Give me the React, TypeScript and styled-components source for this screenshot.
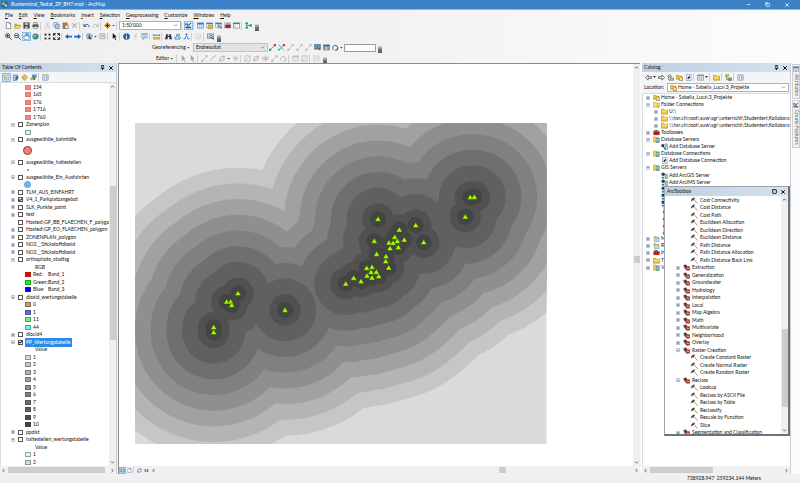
import React from "react";
import styled, { createGlobalStyle, css } from "styled-components";
import { ChevronDown, ChevronLeft, ChevronRight, ChevronUp, Copy, Minus, Pin, Square, X } from "lucide-react";

const GlobalStyle = createGlobalStyle`
  * { box-sizing: border-box; }
  body { margin: 0; }
  button, input, select { font: inherit; color: inherit; margin: 0; padding: 0; border: 0; background: none; border-radius: 0; }
  svg { display: block; }
`;

const Shell = styled.div`
  display: flex;
  flex-direction: column;
  height: 100vh;
  overflow: hidden;
  background: linear-gradient(90deg, #f0f0f0, #f2f2f2 45%, #fcfcfc);
  color: #111;
  font: 5px/7px Lato, "Open Sans", sans-serif;
  white-space: nowrap;
`;

const TitleBar = styled.header`
  display: flex;
  align-items: center;
  gap: 3px;
  height: 10px;
  padding: 0 10px 0 1px;
  background: #3b82c8;
  border-bottom: 1px solid #8fb8e2;
  color: #fff;
`;
const WindowTitle = styled.h1`
  flex: 1;
  margin: 0;
  font: inherit;
`;
const WindowButtons = styled.div`
  display: flex;
  gap: 14px;
`;
const PlainButton = styled.button`
  display: flex;
  align-items: center;
  justify-content: center;
`;

const MenuBar = styled.nav`
  display: flex;
  gap: 6px;
  height: 10px;
  align-items: center;
  padding-left: 5px;
`;
const MenuButton = styled.button`
  &::first-letter { text-decoration: underline; }
`;

const Toolbar = styled.div<{ $indent?: number }>`
  display: flex;
  align-items: center;
  height: 11px;
  margin-left: ${(p) => p.$indent ?? 0}px;
  padding-left: 4px;
`;
const ToolButton = styled.button<{ $on?: boolean; $off?: boolean }>`
  display: grid;
  place-items: center;
  width: 9px;
  height: 9px;
  flex: none;
  ${(p) => p.$on && css`background: #d5e9fb; box-shadow: inset 0 0 0 1px #84bdf0;`}
  ${(p) => p.$off && css`filter: grayscale(1); opacity: 0.35;`}
`;
const Divider = styled.span`
  width: 3px;
  height: 8px;
  flex: none;
  border-left: 1px solid #cfcfcf;
`;
const Caret = styled.span`
  width: 4px;
  flex: none;
  &::after {
    content: "";
    display: block;
    width: 3px;
    height: 2px;
    background: #333;
    clip-path: polygon(0 0, 100% 0, 50% 100%);
  }
`;
const Overflow = styled.button`
  width: 4px;
  height: 7px;
  margin-left: 2px;
  align-self: flex-end;
  background: linear-gradient(#d8d8d8, #777 50%, #555);
`;
const ToolbarMenu = styled.button`
  display: flex;
  align-items: center;
  gap: 1px;
  padding-right: 2px;
`;
const ComboBox = styled.label<{ $width?: number; $grey?: boolean }>`
  display: grid;
  align-items: center;
  flex: ${(p) => (p.$width ? "none" : "1")};
  width: ${(p) => (p.$width ? `${p.$width}px` : "auto")};
  height: 9px;
  padding: 0 2px;
  border: 1px solid ${(p) => (p.$grey ? "#c4c4c4" : "#b0b0b0")};
  background: ${(p) => (p.$grey ? "#e3e3e3" : "#fff")};
  > * { grid-area: 1 / 1; }
  > svg { justify-self: end; color: #555; }
`;
const Select = styled.select<{ $icon?: boolean }>`
  appearance: none;
  width: 100%;
  height: 7px;
  line-height: 7px;
  padding-left: ${(p) => (p.$icon ? 8 : 0)}px;
`;
const ComboIcon = styled.span``;
const TextBox = styled.input`
  width: 32px;
  height: 8px;
  border: 1px solid #999;
  background: #fff;
`;

const Workspace = styled.main`
  display: flex;
  flex: 1;
  min-height: 0;
  margin-top: -2px;
  padding-top: 1px;
`;
const Dock = styled.section<{ $width: number }>`
  display: flex;
  flex-direction: column;
  flex: none;
  width: ${(p) => p.$width}px;
  min-height: 0;
  background: #f4f5f6;
  border-right: 1px solid #c9cfd6;
`;
const DockHeader = styled.div`
  display: flex;
  align-items: center;
  gap: 3px;
  height: 9px;
  flex: none;
  padding: 0 2px;
  background: linear-gradient(90deg, #bfd0e2, #d5e1ee);
`;
const DockTitle = styled.h2`
  flex: 1;
  margin: 0;
  font: inherit;
`;
const DockTools = styled(Toolbar)`
  height: 10px;
  flex: none;
  padding-left: 2px;
`;
const DockBody = styled.div`
  display: flex;
  flex: 1;
  min-height: 0;
  background: #fff;
  border-left: 1px solid #d8dbdf;
  border-top: 1px solid #d8dbdf;
`;

const Rows = styled.ul<{ $tracks: string }>`
  display: grid;
  grid-auto-rows: ${(p) => p.$tracks};
  align-content: start;
  flex: 1;
  min-width: 0;
  margin: 0;
  padding: 0;
  overflow: hidden;
  list-style: none;
`;
const Row = styled.li<{ $indent: number; $tall?: boolean }>`
  display: flex;
  align-items: center;
  padding-left: ${(p) => p.$indent}px;
  min-height: 0;
  ${(p) => p.$tall && css`grid-row: span 2;`}
`;
const Expander = styled.button<{ $hidden?: boolean }>`
  display: grid;
  place-items: center;
  width: 4px;
  height: 4px;
  margin-right: 3px;
  flex: none;
  border: 1px solid #c3c8d2;
  background: #eef0f6;
  visibility: ${(p) => (p.$hidden ? "hidden" : "visible")};
  &::after {
    content: "";
    width: 2px;
    height: ${(p) => (p["aria-expanded"] ? 1 : 2)}px;
    background: #8e9bc0;
  }
`;
const LayerLabel = styled.label`
  display: flex;
  align-items: center;
  gap: 3px;
`;
const CheckBox = styled.input`
  appearance: none;
  width: 5px;
  height: 5px;
  flex: none;
  border: 1px solid #555;
  background: #fff;
  &:checked::before {
    content: "";
    display: block;
    width: 3px;
    height: 3px;
    background: #111;
    clip-path: polygon(0 40%, 40% 60%, 100% 0, 100% 40%, 40% 100%, 0 80%);
  }
`;
const LayerName = styled.span<{ $selected?: boolean }>`
  ${(p) => p.$selected && css`background: #2b8ae6; color: #fff; box-shadow: 0 0 0 1px #2b8ae6;`}
`;
const Swatch = styled.span<{ $fill: string; $edge?: string }>`
  width: 6px;
  height: 5px;
  margin-right: 2px;
  flex: none;
  background: ${(p) => p.$fill};
  border: 1px solid ${(p) => p.$edge ?? "rgba(60,60,60,0.45)"};
`;
const Dot = styled.span<{ $size: number; $fill: string; $edge?: string }>`
  width: ${(p) => p.$size}px;
  height: ${(p) => p.$size}px;
  border-radius: 50%;
  background: ${(p) => p.$fill};
  border: ${(p) => (p.$edge ? `1px solid ${p.$edge}` : "0")};
`;
const BandName = styled.span`
  width: 15px;
  flex: none;
`;
const TreeIcon = styled.span<{ $gap: number }>`
  flex: none;
  margin-right: ${(p) => p.$gap}px;
`;

const VTrack = styled.div`
  display: flex;
  flex-direction: column;
  align-items: center;
  width: 7px;
  flex: none;
  background: #f0f0f0;
  color: #444;
`;
const HTrack = styled.div`
  display: flex;
  align-items: center;
  flex: 1;
  height: 8px;
  background: #f0f0f0;
  color: #444;
`;
const Arrow = styled(PlainButton)`
  width: 7px;
  height: 7px;
  flex: none;
`;
const Space = styled.span<{ $grow: number }>`
  flex: ${(p) => p.$grow} 0 0;
`;
const Thumb = styled.span<{ $grow: number; $vertical?: boolean }>`
  flex: ${(p) => p.$grow} 0 0;
  background: #cdcdcd;
  ${(p) => (p.$vertical ? css`width: 6px;` : css`height: 6px;`)}
`;

const MapFrame = styled.section`
  display: flex;
  flex-direction: column;
  flex: 1;
  min-width: 0;
  margin: 0 2px 0 1px;
  border-left: 1px solid #8c8c8c;
  border-top: 1px solid #8c8c8c;
`;
const MapRow = styled.div`
  display: flex;
  flex: 1;
  min-height: 0;
`;
const MapView = styled.div`
  flex: 1;
  min-width: 0;
  background: #fff;
  > svg { width: 100%; height: 100%; }
`;
const MapFooter = styled.div`
  display: flex;
  align-items: center;
  height: 8px;
  flex: none;
  background: #f0f0f0;
`;
const FooterButton = styled(ToolButton)`
  width: 7px;
  height: 7px;
`;

const LocationRow = styled.div`
  display: flex;
  align-items: center;
  gap: 3px;
  height: 11px;
  flex: none;
  padding: 0 1px 0 2px;
`;
const SideTabs = styled.aside`
  display: flex;
  flex-direction: column;
  gap: 1px;
  width: 9px;
  flex: none;
  padding: 1px 0 0 1px;
`;
const SideTab = styled.button`
  display: flex;
  align-items: center;
  gap: 2px;
  padding: 1px 0 2px;
  writing-mode: vertical-rl;
  border: 1px solid #d0d0d0;
  background: #f2f2f2;
  color: #666;
`;

const CatalogWrap = styled.div`
  position: relative;
  display: flex;
  flex: none;
  min-height: 0;
`;
const Toolbox = styled.section`
  position: absolute;
  top: 123px;
  left: 22px;
  right: 1px;
  height: 250px;
  display: flex;
  flex-direction: column;
  background: #fff;
  border: 1px solid #9aa5b1;
  border-right: 2px solid #6d7278;
  border-bottom: 2px solid #6d7278;
`;
const StatusBar = styled.footer`
  display: flex;
  justify-content: flex-end;
  align-items: center;
  height: 9px;
  flex: none;
  padding-right: 39px;
  background: #f0f0f0;
`;

const glyphs: Record<string, React.ReactNode> = {
  globe: <><circle cx="8" cy="8" r="7" fill="#1e5c86" /><path d="M3 4l5-2 2 4-4 4-4-2z" fill="#8fd06a" /><circle cx="11" cy="10" r="3.5" fill="#cfe8f5" stroke="#222" /></>,
  page: <path d="M3 1h7l3 3v11H3zM10 1v3h3" fill="#fff" stroke="#556" strokeWidth="1.4" />,
  open: <><path d="M1 4h5l1 2h7v8H1z" fill="#d9a520" /><path d="M4 8h12l-3 6H1z" fill="#f6d878" stroke="#9a7a20" /></>,
  save: <><path d="M1 1h14v14H1z" fill="#37424e" /><path d="M4 2h8v5H4z" fill="#d8c25a" /><path d="M5 10h6v5H5z" fill="#ccc" /></>,
  print: <><path d="M4 1h8v5H4z" fill="#ddd" stroke="#444" /><path d="M1 6h14v6H1z" fill="#555" /><path d="M4 10h8v5H4z" fill="#eee" stroke="#444" /></>,
  cut: <path d="M5 1l5 10M11 1L6 11M5 11a2 2 0 1 0 1 3M11 11a2 2 0 1 1-1 3" fill="none" stroke="#555" strokeWidth="1.6" />,
  copy: <><path d="M2 1h8v10H2z" fill="#e8f0fb" stroke="#5d7896" strokeWidth="1.4" /><path d="M6 5h8v10H6z" fill="#b9d0ec" stroke="#456a95" strokeWidth="1.4" /></>,
  paste: <><path d="M2 2h10v13H2z" fill="#c08038" stroke="#704818" /><path d="M7 7h8v8H7z" fill="#dce9f8" stroke="#456" /></>,
  remove: <path d="M3 3l10 10M13 3L3 13" stroke="#333" strokeWidth="2.6" />,
  undo: <path d="M2 4v6h6M3 9c4-6 11-4 11 3" fill="none" stroke="#25539b" strokeWidth="2.2" />,
  redo: <path d="M14 4v6H8M13 9C9 3 2 5 2 12" fill="none" stroke="#555" strokeWidth="2.2" />,
  add: <><path d="M8 1l7 7-7 7-7-7z" fill="#e5b825" stroke="#554310" /><path d="M8 4v8M4 8h8" stroke="#222" strokeWidth="2.4" /></>,
  editor: <><path d="M1 14V6l4 4 4-5 6 9z" fill="#9cc7ee" /><path d="M2 13h12M4 11L14 2M2 3v4M5 3v4" stroke="#222" strokeWidth="2" /></>,
  table: <><path d="M1 2h14v12H1z" fill="#fff" stroke="#496da0" strokeWidth="1.4" /><path d="M1 2h14v4H1z" fill="#3f78c0" /><path d="M1 10h14M6 6v8M10 6v8" stroke="#7d96b8" /></>,
  grid: <><path d="M1 2h14v12H1z" fill="#fff" stroke="#777" strokeWidth="1.4" /><path d="M1 2h14v3H1z" fill="#888" /><path d="M1 8h14M1 11h14M6 5v9M10 5v9" stroke="#999" /></>,
  catalog: <><path d="M1 2h14v11H1z" fill="#fff" stroke="#496da0" /><path d="M1 2h14v3H1z" fill="#3f78c0" /><path d="M5 7h10v8H5z" fill="#e9bd37" stroke="#806515" /></>,
  search: <><path d="M1 2h14v11H1z" fill="#e8f3fd" stroke="#496da0" /><path d="M1 2h14v3H1z" fill="#3f78c0" /><circle cx="9" cy="9" r="3" fill="#b8ddc8" stroke="#345" /><path d="M11 11l4 4" stroke="#333" strokeWidth="2" /></>,
  toolbox: <><path d="M1 2h14v11H1z" fill="#e8f3fd" stroke="#496da0" /><path d="M3 6h12v8H3z" fill="#c2221c" /><path d="M6 6V4h6v2M3 9h12" stroke="#611" fill="none" /></>,
  python: <><path d="M1 2h14v12H1z" fill="#fff" stroke="#555" strokeWidth="1.2" /><path d="M1 2h14v3H1z" fill="#3f78c0" /><path d="M3 8l3 2-3 2" fill="none" stroke="#777" /></>,
  model: <><path d="M4 3v10M4 8h8" stroke="#2e9b52" strokeWidth="2" /><path d="M1 1h6v4H1z" fill="#2b7fd0" /><path d="M1 11h6v4H1z" fill="#2f9f55" /><path d="M10 5h6v6h-6z" fill="#2bb0c5" /></>,
  zoomIn: <><circle cx="6" cy="6" r="5" fill="#e3eff8" stroke="#333" strokeWidth="1.6" /><path d="M3 6h6M6 3v6M10 10l5 5" stroke="#222" strokeWidth="2" /></>,
  zoomOut: <><circle cx="6" cy="6" r="5" fill="#e3eff8" stroke="#333" strokeWidth="1.6" /><path d="M3 6h6M10 10l5 5" stroke="#222" strokeWidth="2" /></>,
  hand: <path d="M4 15L1 8l2-1 2 2V3l2-1 1 5V1h2v6l1-5 2 1v6l1-3 1 1-1 5-2 4z" fill="#fff" stroke="#555" strokeWidth="1.2" />,
  world: <><circle cx="8" cy="8" r="7" fill="#2a71c0" /><path d="M2 5l5-3 5 3-4 5-4 2zM10 11l4-3-3 6z" fill="#6cc04c" /></>,
  shrink: <path d="M1 1h5v5H1zM10 1h5v5h-5zM1 10h5v5H1zM10 10h5v5h-5z" fill="#111" stroke="#f2f2f2" />,
  grow: <path d="M1 6V1h5zM10 1h5v5zM1 10v5h5zM15 10v5h-5zM3 3l3 3M13 3l-3 3M3 13l3-3M13 13l-3-3" fill="#111" stroke="#111" strokeWidth="1.4" />,
  back: <path d="M0 8l7-6v4h9v4H7v4z" fill="#2463c4" />,
  next: <path d="M16 8L9 2v4H0v4h9v4z" fill="#2463c4" />,
  select: <><path d="M1 3l8-2 6 5-3 8-9-1z" fill="#a9cde0" stroke="#567" /><path d="M7 4v9l2-2 3 3" fill="#333" stroke="#222" strokeWidth="1.4" /></>,
  clear: <path d="M2 2h11v11H2zM5 5h5v4H5z" fill="#fff" stroke="#888" strokeWidth="1.5" />,
  pointer: <path d="M4 0v13l3-3 3 6 2-1-3-6h4z" fill="#111" />,
  info: <><circle cx="8" cy="8" r="7.5" fill="#1b5db8" /><path d="M8 7v6M8 3v2" stroke="#fff" strokeWidth="2.4" /></>,
  bolt: <path d="M10 0L4 9h4l-3 7 8-10H9l3-6z" fill="#888" />,
  popup: <><path d="M2 1h12v10H8l-3 4v-4H2z" fill="#dcecff" stroke="#4a78b5" strokeWidth="1.4" /><path d="M5 4h6M5 7h6" stroke="#777" strokeWidth="1.4" /></>,
  measure: <><path d="M1 10h14v4H1z" fill="#ecc445" stroke="#8a6a10" /><path d="M1 5h14M1 3v4M15 3v4" stroke="#2463c4" strokeWidth="1.8" /></>,
  find: <path d="M3 2h3v4h4V2h3l3 12h-6V9H6v5H0z" fill="#2d2d35" />,
  route: <><path d="M2 14h12V9H9V3H6v6H2z" fill="#cfe3f5" stroke="#3271b4" strokeWidth="1.4" /><circle cx="12" cy="4" r="2" fill="#2f9f55" /></>,
  xy: <path d="M8 1v6M8 7l-5 7M8 7l5 7M5 3h6M1 13h5M10 13h5" stroke="#3c82c8" strokeWidth="2" />,
  clock: <><path d="M1 2h12v11H1z" fill="#eee" stroke="#777" /><circle cx="10" cy="10" r="4" fill="#ddd" stroke="#666" /></>,
  viewer: <><path d="M1 2h14v10H1z" fill="#cfe3f5" stroke="#3b5f90" strokeWidth="1.4" /><circle cx="9" cy="8" r="3" fill="#fff" stroke="#222" strokeWidth="1.4" /><path d="M11 10l4 5" stroke="#222" strokeWidth="2" /></>,
  dataView: <><path d="M1 2h14v12H1z" fill="#4d8fd6" /><circle cx="8" cy="8" r="4" fill="#d8e06a" /></>,
  rectify: <><path d="M1 1h14v11H1z" fill="#5d87b8" stroke="#33557e" /><path d="M2 6h12v3H2z" fill="#7db35c" /><path d="M8 7l6 7" stroke="#cc3a2d" strokeWidth="2.4" /></>,
  linkTable: <><path d="M1 2h14v12H1z" fill="#fff" stroke="#496da0" strokeWidth="1.4" /><path d="M1 2h14v4H1z" fill="#2d5fa8" /><path d="M2 7h5v6H2z" fill="#4fb25e" /><path d="M9 7h5v6H9z" fill="#db6a5e" /></>,
  link: <><path d="M3 13L13 3" stroke="#45a05a" strokeWidth="1.8" /><path d="M0 11h5v5H0z" fill="#27ad45" /><path d="M11 0h5v5h-5z" fill="#dc3030" /></>,
  autoLink: <><path d="M2 2l11 12M3 13L14 2" stroke="#29a3c7" strokeWidth="2" /><path d="M0 11h4v4H0z" fill="#27ad45" /><path d="M11 0h5v5h-5z" fill="#dc3030" /></>,
  line: <path d="M2 14L14 2M1 12h4v3H1zM11 1h4v3h-4z" stroke="#444" strokeWidth="1.6" fill="none" />,
  rotate: <path d="M4 14a6 6 0 1 1 8-1M12 8v6h-5" fill="none" stroke="#304a9b" strokeWidth="2" />,
  arc: <path d="M2 14C2 6 8 2 14 2" stroke="#444" strokeWidth="2" fill="none" />,
  shape: <path d="M3 12V4h8M11 4v8H3M1 10h4v4H1zM9 2h4v4H9z" stroke="#444" strokeWidth="1.6" fill="none" />,
  star: <path d="M8 1v14M1 8h14M3 3l10 10M13 3L3 13" stroke="#444" strokeWidth="1.3" />,
  split: <path d="M8 1v14M2 5h4v6H2zM10 5h4v6h-4z" stroke="#444" strokeWidth="1.6" fill="none" />,
  verts: <path d="M2 2h12v12H2zM2 14L14 2" stroke="#444" strokeWidth="1.6" fill="none" />,
  order: <><path d="M3 3v10h4M3 8h4" stroke="#8a8a8a" strokeWidth="1.4" fill="none" /><path d="M1 1h5v4H1zM6 6h4v4H6zM6 11h4v4H6z" fill="#e8b93a" /><path d="M11 8h4M11 13h4M8 3h6" stroke="#5b83b5" strokeWidth="1.6" /></>,
  source: <><path d="M3 2h10v9l-3 4H3z" fill="#b9cbe0" stroke="#4d6b8f" strokeWidth="1.3" /><path d="M8 6l6-2v7l-6 4z" fill="#46607a" /></>,
  visible: <><path d="M8 1l7 7-7 7-7-7z" fill="#efc440" stroke="#9a7a10" /><circle cx="8" cy="8" r="2.5" fill="#fff" stroke="#555" /></>,
  picked: <><path d="M5 1h10v8H5z" fill="#2ea2dc" /><path d="M1 8h11v6H1z" fill="#d8a534" /><path d="M7 6l4 7" stroke="#222" strokeWidth="2" /></>,
  options: <path d="M2 2h12v12H2zM5 5h2M9 5h3M5 8h2M9 8h3M5 11h2M9 11h3" fill="#edf3fa" stroke="#5e7fa6" strokeWidth="1.5" />,
  greyBack: <path d="M1 8l6-6v4h8v4H7v4z" fill="#eee" stroke="#444" strokeWidth="1.6" />,
  greyNext: <path d="M15 8L9 2v4H1v4h8v4z" fill="#eee" stroke="#444" strokeWidth="1.6" />,
  up: <path d="M4 8V6H1l5-5 5 5H8v4h7v4H4z" fill="#ddd" stroke="#444" strokeWidth="1.4" />,
  home: <><path d="M1 3h5l1 2h7v7H1z" fill="#f0c63c" stroke="#94710f" /><path d="M7 10l4-4 4 4v5H8z" fill="#f9e6a0" stroke="#775a10" strokeWidth="1.3" /></>,
  folder: <><path d="M1 3h5l1 2h8v9H1z" fill="#f2cc48" stroke="#a07c14" strokeWidth="1.3" /><path d="M2 7h12" stroke="#fff0b0" strokeWidth="1.6" /></>,
  folderLink: <><path d="M1 3h5l1 2h8v9H1z" fill="#f6df8b" stroke="#b59438" strokeWidth="1.3" /><path d="M8 9h7v6H8z" fill="#eabf2d" /></>,
  treeView: <><path d="M1 1h7v5H1z" fill="#eabf2d" stroke="#94710f" /><path d="M4 6v7h4" stroke="#444" strokeWidth="1.6" fill="none" /><path d="M8 9h7v6H8z" fill="#5fa55d" stroke="#356b35" /></>,
  redbox: <><path d="M3 2h8v4H3z" fill="#777" /><path d="M1 5h14v9H1z" fill="#c92d22" /><path d="M1 9h14" stroke="#5e1009" strokeWidth="1.5" /></>,
  dbFolder: <><path d="M1 2h5l1 2h7v10H1z" fill="#f2d365" stroke="#a8861e" /><path d="M7 5h7v10H7z" fill="#7fb1a8" stroke="#386a74" /><path d="M7 9h7" stroke="#fff" /></>,
  addDb: <><path d="M9 2h6v13H9z" fill="#a9c9e6" stroke="#567" /><path d="M1 3h6v6H1z" fill="#202830" /><path d="M5 8l5 7" stroke="#23619c" strokeWidth="2.4" /></>,
  connect: <><path d="M3 1h11v14H3z" fill="#e8f1f8" stroke="#7c96ad" strokeWidth="1.4" /><path d="M5 10l5-6 2 3-4 5z" fill="#16374f" /></>,
  gis: <><circle cx="5" cy="5" r="4" fill="#23435c" /><path d="M9 5h6v10H9z" fill="#a4cba5" stroke="#4e7a52" /><path d="M2 11h5v4H2z" fill="#3475b8" /></>,
  gisRed: <><path d="M6 1h7v9H6z" fill="#cddce8" stroke="#7892a8" /><circle cx="8" cy="12" r="4" fill="#dd4433" /></>,
  cloud: <><path d="M1 2h6l1 2h6v4H1z" fill="#e7c24b" /><path d="M3 7h11v8H3z" fill="#b7d9f2" stroke="#4785b7" /></>,
  hammer: <><path d="M6 5l9 10" stroke="#9b8a6a" strokeWidth="2" /><path d="M0 8l2-4 5-3 3 2-3 1-1 4-2-1-2 3z" fill="#3a3a3a" /></>,
  tools: <><path d="M1 2l6-1 3 4-3 5-5-2z" fill="#4c4c4c" /><path d="M6 6h9v8H8l-3-4z" fill="#c73a2b" stroke="#63221a" strokeWidth="1.2" /><path d="M8 9l6 2" stroke="#eee" strokeWidth="1.4" /></>,
  refresh: <path d="M2 7c1-6 9-6 11-2M14 2v4h-4M14 9c-1 6-9 6-11 2M2 14v-4h4" fill="none" stroke="#2f6ab0" strokeWidth="2" />,
  pause: <path d="M2 3h5v10H2zM9 3h5v10H9z" fill="#5d8bc4" />,
};

const Glyph = ({ name, size = 7 }: { name: string; size?: number }) => (
  <svg width={size} height={size} viewBox="0 0 16 16" fill="none" aria-hidden="true">{glyphs[name]}</svg>
);

/* "|" draws a divider, "v" a drop-down mark, "+" a pressed tool and "-" a disabled one. */
const Tools = ({ items }: { items: string }) => (
  <>
    {items.split(" ").map((item, i) => {
      if (item === "|") return <Divider key={i} />;
      if (item === "v") return <Caret key={i} />;
      const name = item.replace(/^[+-]/, "");
      return (
        <ToolButton key={i} type="button" aria-label={name} $on={item[0] === "+"} $off={item[0] === "-"}>
          <Glyph name={name} />
        </ToolButton>
      );
    })}
  </>
);

const VScroll = ({ before, size, after }: { before: number; size: number; after: number }) => (
  <VTrack>
    <Arrow type="button" aria-label="Scroll up"><ChevronUp size={5} strokeWidth={4} /></Arrow>
    <Space $grow={before} /><Thumb $vertical $grow={size} /><Space $grow={after} />
    <Arrow type="button" aria-label="Scroll down"><ChevronDown size={5} strokeWidth={4} /></Arrow>
  </VTrack>
);
const HScroll = ({ before, size, after }: { before: number; size: number; after: number }) => (
  <HTrack>
    <Arrow type="button" aria-label="Scroll left"><ChevronLeft size={5} strokeWidth={4} /></Arrow>
    <Space $grow={before} /><Thumb $grow={size} /><Space $grow={after} />
    <Arrow type="button" aria-label="Scroll right"><ChevronRight size={5} strokeWidth={4} /></Arrow>
  </HTrack>
);

type TocItem =
  | { kind: "layer"; name: string; mark?: "+" | "-"; checked?: boolean; selected?: boolean }
  | { kind: "class"; name: string; fill: string; edge?: string }
  | { kind: "band"; name: string; band: string; fill: string }
  | { kind: "dot"; size: number; fill: string; edge?: string; tall?: boolean; at: number }
  | { kind: "heading"; name: string };

const layer = (name: string, mark?: "+" | "-", checked?: boolean, selected?: boolean): TocItem => ({ kind: "layer", name, mark, checked, selected });
const cls = (name: string, fill: string, edge?: string): TocItem => ({ kind: "class", name, fill, edge });

const greys = ["#dadada", "#c6c6c6", "#b4b4b4", "#a1a1a1", "#8f8f8f", "#808080", "#6f6f6f", "#606060", "#515151", "#444444"];

const toc: TocItem[] = [
  ...["154", "165", "176", "1'716", "1'760"].map((n) => cls(n, "#fa8379", "#e8786f")),
  layer("Zonenplan", "-"),
  cls("", "#bdfbf6"),
  layer("ausgewählte_bahnhöfe", "-"),
  { kind: "dot", size: 9, fill: "#f77c7c", edge: "#8c3c3c", tall: true, at: 22 },
  layer("ausgewählte_haltestellen", "-"),
  { kind: "dot", size: 2, fill: "#3f9f6e", at: 26 },
  layer("ausgewählte_Ein_Ausfahrten", "-"),
  { kind: "dot", size: 7, fill: "#6fb2f2", at: 23 },
  layer("TLM_AUS_EINFAHRT", "+"),
  layer("V4_1_Parkplatzangebot", "+", true),
  layer("SLK_Punkte_point", "+"),
  layer("test", "+"),
  layer("Hosted\\GP_BB_FLAECHEN_F_polygon"),
  layer("Hosted\\GP_EO_FLAECHEN_polygon", "+"),
  layer("ZONENPLAN_polygon", "+"),
  layer("NO2__Stickstoffdioxid", "+"),
  layer("NO2__Stickstoffdioxid", "+"),
  layer("orthophoto_stadtsg", "-"),
  { kind: "heading", name: "RGB" },
  { kind: "band", name: "Red:", band: "Band_1", fill: "#f00" },
  { kind: "band", name: "Green:", band: "Band_2", fill: "#0f0" },
  { kind: "band", name: "Blue:", band: "Band_3", fill: "#00f" },
  layer("dioxid_wertungstabelle", "-"),
  cls("0", "#cf9a72"),
  cls("1", "#6464f2"),
  cls("11", "#67f56b"),
  cls("44", "#6bf5f2"),
  layer("diocid4", "+"),
  layer("PP_Wertungstabelle", "-", true, true),
  { kind: "heading", name: "Value" },
  ...greys.map((g, i) => cls(String(i + 1), g)),
  layer("ppdist", "+"),
  layer("haltestellen_wertungstabelle", "-"),
  { kind: "heading", name: "Value" },
  cls("1", "#e3fbef"),
  cls("2", "#c3e8d3"),
];

const TocRow = ({ item }: { item: TocItem }) => {
  switch (item.kind) {
    case "layer":
      return (
        <Row $indent={10}>
          <Expander type="button" $hidden={!item.mark} aria-label={`Toggle ${item.name}`} aria-expanded={item.mark === "-"} />
          <LayerLabel>
            <CheckBox type="checkbox" defaultChecked={item.checked} />
            <LayerName $selected={item.selected}>{item.name}</LayerName>
          </LayerLabel>
        </Row>
      );
    case "class":
      return <Row $indent={24}><Swatch $fill={item.fill} $edge={item.edge} />{item.name}</Row>;
    case "band":
      return <Row $indent={24}><Swatch $fill={item.fill} /><BandName>{item.name}</BandName>{item.band}</Row>;
    case "dot":
      return <Row $indent={item.at} $tall={item.tall}><Dot $size={item.size} $fill={item.fill} $edge={item.edge} /></Row>;
    default:
      return <Row $indent={34}>{item.name}</Row>;
  }
};

type TreeNode = { level: number; icon: string; name: string; mark?: "+" | "-" };
const node = (level: number, mark: "+" | "-" | undefined, icon: string, name = ""): TreeNode => ({ level, mark, icon, name });

const catalog: TreeNode[] = [
  node(0, "+", "home", "Home - Sabella_Luca\\3_Projekte"),
  node(0, "-", "folderLink", "Folder Connections"),
  node(1, "+", "folder", "U:\\"),
  node(1, "+", "folder", "\\\\hsr.ch\\root\\auw\\sgr\\unterricht\\Studenten\\Kollabora"),
  node(1, "+", "folder", "\\\\hsr.ch\\root\\auw\\sgr\\unterricht\\Studenten\\Kollabora"),
  node(0, "+", "redbox", "Toolboxes"),
  node(0, "-", "dbFolder", "Database Servers"),
  node(1, undefined, "addDb", "Add Database Server"),
  node(0, "-", "dbFolder", "Database Connections"),
  node(1, undefined, "connect", "Add Database Connection"),
  node(0, "-", "dbFolder", "GIS Servers"),
  node(1, undefined, "gis", "Add ArcGIS Server"),
  node(1, undefined, "gis", "Add ArcIMS Server"),
  ...["gis", "gis", "gis", "gisRed", "gisRed", "gisRed", "gisRed"].map((icon) => node(1, undefined, icon)),
  node(0, "+", "cloud", "M"),
  node(0, "+", "cloud", "R"),
  node(0, "+", "redbox", "In"),
  node(0, "+", "folder", "T"),
  node(0, "+", "dbFolder", "V"),
];

const tool = (name: string) => node(1, undefined, "hammer", name);
const toolset = (name: string, mark: "+" | "-" = "+") => node(0, mark, "tools", name);

const toolbox: TreeNode[] = [
  ...["Cost Connectivity", "Cost Distance", "Cost Path", "Euclidean Allocation", "Euclidean Direction", "Euclidean Distance", "Path Distance", "Path Distance Allocation", "Path Distance Back Link"].map(tool),
  ...["Extraction", "Generalization", "Groundwater", "Hydrology", "Interpolation", "Local", "Map Algebra", "Math", "Multivariate", "Neighborhood", "Overlay"].map((s) => toolset(s)),
  toolset("Raster Creation", "-"),
  ...["Create Constant Raster", "Create Normal Raster", "Create Random Raster"].map(tool),
  toolset("Reclass", "-"),
  ...["Lookup", "Reclass by ASCII File", "Reclass by Table", "Reclassify", "Rescale by Function", "Slice"].map(tool),
  toolset("Segmentation and Classification"),
];

const TreeRows = ({ nodes, base, gap }: { nodes: TreeNode[]; base: number; gap: number }) => (
  <>
    {nodes.map((item, i) => (
      <Row key={i} $indent={base + item.level * 8}>
        <Expander type="button" $hidden={!item.mark} aria-label={`Toggle ${item.name}`} aria-expanded={item.mark === "-"} />
        <TreeIcon $gap={gap}><Glyph name={item.icon} /></TreeIcon>
        {item.name}
      </Row>
    ))}
  </>
);

const sites: [number, number][] = [
  [259, 155], [296.7, 161.3], [304.7, 178.3], [351.3, 133.3], [355.3, 133], [346.3, 152.7], [280.3, 165.7],
  [275.7, 173], [285.3, 175.7], [278.3, 177], [270, 178.7], [274, 179], [271, 184.3], [279.3, 183.3], [255.3, 177],
  [257.7, 190], [267, 192.3], [266.7, 197.3], [269.7, 203.7], [247.7, 204], [253, 203], [252, 208], [257.3, 208],
  [248, 211.7], [253, 213.7], [259.7, 212.3], [234.7, 214], [242, 217.3], [226.7, 219.7], [119, 229.3],
  [107.7, 237.7], [111.7, 237.7], [112.7, 241], [94.7, 263.3], [94.7, 268.3], [166, 246],
];
const radii = [125.6, 109.9, 94.2, 78.5, 62.8, 47.1, 31.4, 15.7, 8];

const DistanceMap = () => (
  <svg viewBox="0 0 512 402" preserveAspectRatio="xMinYMin meet" role="img" aria-label="Distance classes around parking sites">
    <clipPath id="raster"><rect x="16" y="59" width="411.5" height="321" /></clipPath>
    <g clipPath="url(#raster)">
      <rect x="16" y="59" width="412" height="321" fill={greys[0]} />
      {radii.map((r, i) => (
        <g key={r} fill={greys[i + 1]}>
          {sites.map(([x, y], k) => <circle key={k} cx={x} cy={y} r={r} />)}
        </g>
      ))}
    </g>
    {sites.map(([x, y], k) => (
      <path key={k} d={`M${x} ${y - 2.8}l3 5h-6z`} fill="#a6ff00" stroke="#2c4300" strokeWidth="0.4" />
    ))}
  </svg>
);

const DockButtons = ({ max }: { max?: boolean }) => (
  <>
    <PlainButton type="button" aria-label={max ? "Maximize" : "Pin"}>{max ? <Square size={5} strokeWidth={4} /> : <Pin size={5} strokeWidth={4} />}</PlainButton>
    <PlainButton type="button" aria-label="Close"><X size={6} strokeWidth={4} /></PlainButton>
  </>
);

export default function App() {
  return (
    <Shell>
      <GlobalStyle />
      <TitleBar>
        <Glyph name="globe" />
        <WindowTitle>Busterminal_Testat_ZP_BH7.mxd - ArcMap</WindowTitle>
        <WindowButtons>
          <PlainButton type="button" aria-label="Minimize"><Minus size={5} strokeWidth={3} /></PlainButton>
          <PlainButton type="button" aria-label="Restore"><Copy size={5} strokeWidth={3} /></PlainButton>
          <PlainButton type="button" aria-label="Close"><X size={6} strokeWidth={3} /></PlainButton>
        </WindowButtons>
      </TitleBar>
      <MenuBar>
        {["File", "Edit", "View", "Bookmarks", "Insert", "Selection", "Geoprocessing", "Customize", "Windows", "Help"].map((m) => (
          <MenuButton key={m} type="button">{m}</MenuButton>
        ))}
      </MenuBar>
      <Toolbar>
        <Tools items="page open save print | -cut copy paste -remove | undo -redo | add v |" />
        <ComboBox $width={62}>
          <Select aria-label="Map scale"><option>1:50'000</option></Select>
          <ChevronDown size={5} strokeWidth={3} />
        </ComboBox>
        <Divider />
        <Tools items="+editor | table catalog search toolbox python | model" />
        <Overflow type="button" aria-label="Toolbar options" />
      </Toolbar>
      <Toolbar>
        <Tools items="zoomIn zoomOut +hand world | shrink grow | back next | select v clear | pointer | info -bolt popup | measure | find route xy | -clock | viewer" />
        <Overflow type="button" aria-label="Toolbar options" />
      </Toolbar>
      <Toolbar $indent={148}>
        <ToolbarMenu type="button">Georeferencing<Caret /></ToolbarMenu>
        <ComboBox $width={75} $grey>
          <Select aria-label="Georeferenced layer"><option>Endresultat</option></Select>
          <ChevronDown size={5} strokeWidth={3} />
        </ComboBox>
        <Tools items="link autoLink -line -line -line rectify linkTable rotate v" />
        <TextBox aria-label="Rotation" />
        <Overflow type="button" aria-label="Toolbar options" />
      </Toolbar>
      <Toolbar $indent={152}>
        <ToolbarMenu type="button">Editor<Caret /></ToolbarMenu>
        <Divider />
        <Tools items="-pointer -pointer | -line -arc -shape v -star | -verts -shape -split -line -rotate | -table -verts | -options" />
        <Overflow type="button" aria-label="Toolbar options" />
      </Toolbar>
      <Workspace>
        <Dock $width={117}>
          <DockHeader><DockTitle>Table Of Contents</DockTitle><DockButtons /></DockHeader>
          <DockTools><Tools items="+order source visible picked | options" /></DockTools>
          <DockBody>
            <Rows $tracks="8px 7px">{toc.map((item, i) => <TocRow key={i} item={item} />)}</Rows>
            <VScroll before={96} size={153} after={119} />
          </DockBody>
          <MapFooter><HScroll before={1} size={91} after={4} /></MapFooter>
        </Dock>
        <MapFrame>
          <MapRow>
            <MapView><DistanceMap /></MapView>
            <VScroll before={185} size={7} after={196} />
          </MapRow>
          <MapFooter>
            <FooterButton type="button" aria-label="Data view" $on><Glyph name="dataView" size={5} /></FooterButton>
            <FooterButton type="button" aria-label="Layout view"><Glyph name="page" size={5} /></FooterButton>
            <Divider />
            <FooterButton type="button" aria-label="Refresh"><Glyph name="refresh" size={5} /></FooterButton>
            <FooterButton type="button" aria-label="Pause drawing"><Glyph name="pause" size={5} /></FooterButton>
            <HScroll before={341} size={7} after={126} />
          </MapFooter>
        </MapFrame>
        <CatalogWrap>
          <Dock $width={149}>
            <DockHeader><DockTitle>Catalog</DockTitle><DockButtons /></DockHeader>
            <DockTools><Tools items="greyBack v greyNext up home connect | grid v | folder | treeView | options" /></DockTools>
            <LocationRow>
              Location:
              <ComboBox>
                <ComboIcon><Glyph name="home" /></ComboIcon>
                <Select $icon aria-label="Location"><option>Home - Sabella_Luca\3_Projekte</option></Select>
                <ChevronDown size={5} strokeWidth={3} />
              </ComboBox>
            </LocationRow>
            <DockBody>
              <Rows $tracks="7px 7px 7px 7px 7px 7px 7px 7px 7px 7px 7px 8px">
                <TreeRows nodes={catalog} base={3} gap={1} />
              </Rows>
            </DockBody>
            <MapFooter><HScroll before={1} size={63} after={70} /></MapFooter>
          </Dock>
          <Toolbox>
            <DockHeader><DockTitle>ArcToolbox</DockTitle><DockButtons max /></DockHeader>
            <MapRow>
              <Rows $tracks="8px 7px"><TreeRows nodes={toolbox} base={11} gap={2} /></Rows>
              <VScroll before={124} size={77} after={20} />
            </MapRow>
          </Toolbox>
        </CatalogWrap>
        <SideTabs>
          <SideTab type="button"><Glyph name="table" size={6} />Attributes</SideTab>
          <SideTab type="button"><Glyph name="editor" size={6} />Create Features</SideTab>
        </SideTabs>
      </Workspace>
      <StatusBar>738928.947&nbsp; 259234.144 Meters</StatusBar>
    </Shell>
  );
}
